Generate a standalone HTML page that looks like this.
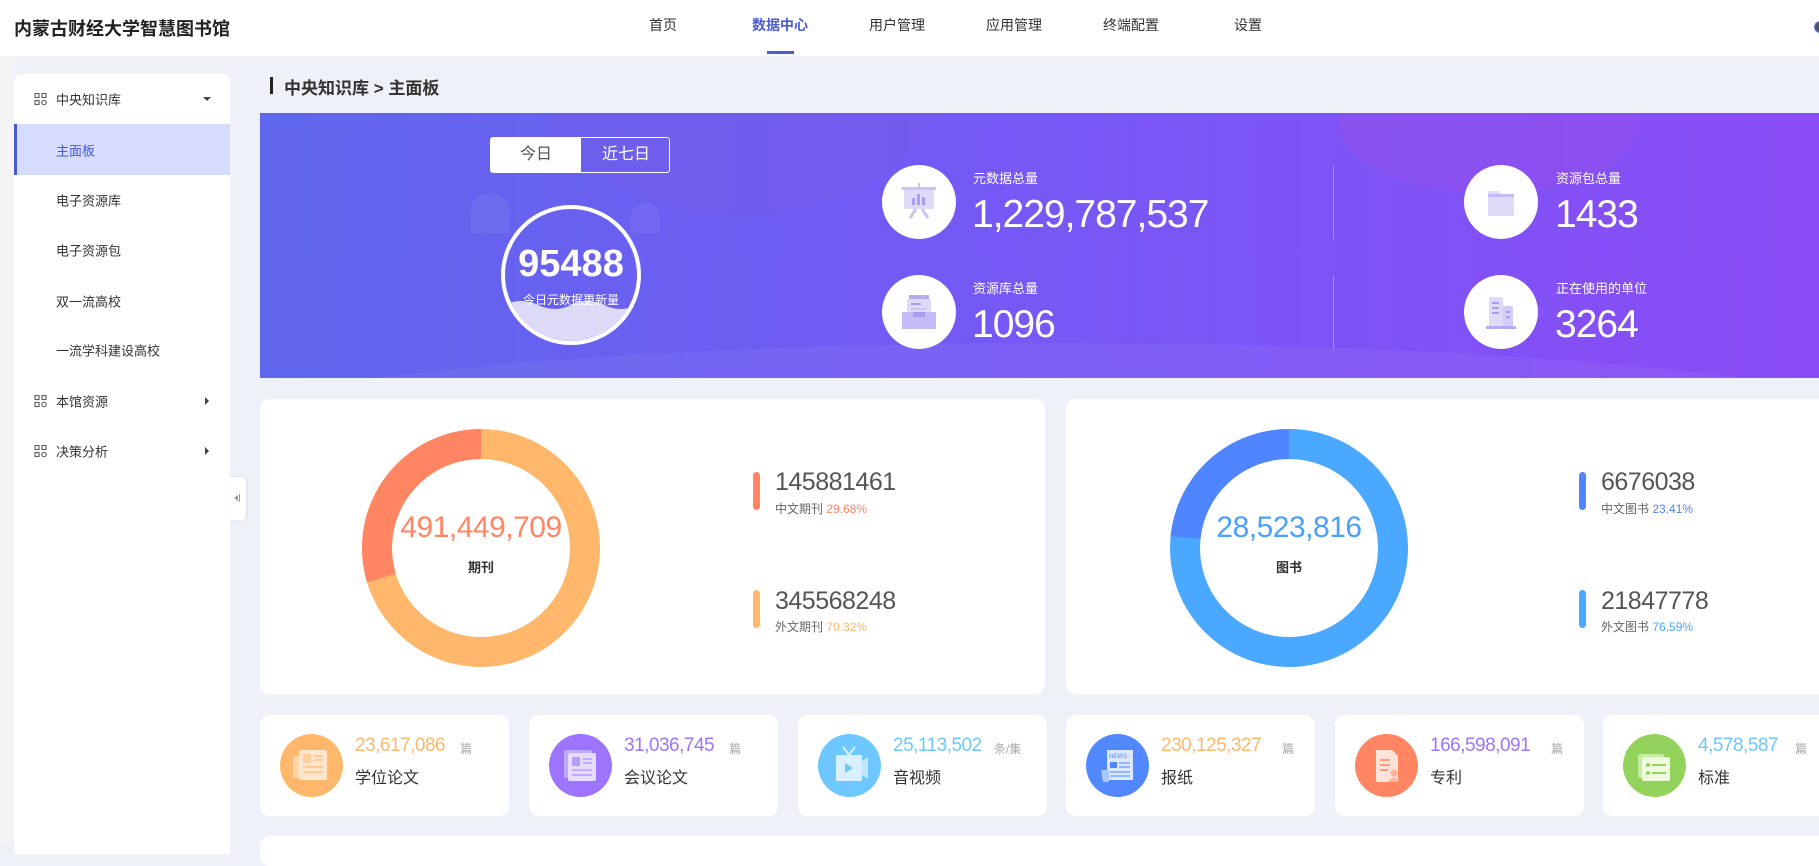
<!DOCTYPE html>
<html><head><meta charset="utf-8">
<style>
*{margin:0;padding:0;box-sizing:border-box}
body{width:1819px;height:843px;overflow:hidden;background:#eef1f8;font-family:"Liberation Sans","Noto Sans CJK SC",sans-serif;position:relative;color:#333}
.abs{position:absolute}
.hdr{left:0;top:0;width:1819px;height:56px;background:#fff}
.nav{top:0;height:52px;line-height:50px;font-size:14px;color:#333;transform:translateX(-50%)}
.side{left:0;top:56px;width:14px;height:787px;background:#f4f4f5}
.sb{left:14px;top:74px;width:216px;height:780px;background:#fff;border-radius:8px 8px 0 0}
.si{left:56px;font-size:13px;color:#333;transform:translateY(-50%)}
.ic{width:13px;height:13px;transform:translateY(-50%)}
.card{background:#fff;border-radius:10px}
.bn{left:260px;top:113px;width:1559px;height:265px;background:linear-gradient(90deg,#5f67ec 0%,#7459f5 45%,#8a4cf6 100%);overflow:hidden}
.wc{background:#fff;border-radius:50%}
.lbl{font-size:13px;color:#fff}
.num{font-size:39px;color:#fff;line-height:1;letter-spacing:-1px}
.sc .n{position:absolute;left:95px;top:20px;font-size:19px;letter-spacing:-0.5px}
.sc .u{position:absolute;top:25px;font-size:12px;color:#aaa}
.sc .t{position:absolute;left:95px;top:49px;font-size:16px;color:#333}
.sc .c{position:absolute;left:20px;top:19px;width:63px;height:63px;border-radius:50%}
</style></head><body>
<div class="abs hdr"></div>
<div class="abs" style="left:14px;top:15px;font-size:18px;font-weight:bold;color:#222">内蒙古财经大学智慧图书馆</div>
<div class="abs nav" style="left:663px">首页</div>
<div class="abs nav" style="left:780px;color:#4a5bd6;font-weight:bold">数据中心</div>
<div class="abs" style="left:767px;top:51px;width:27px;height:3px;background:#4a5bd6"></div>
<div class="abs nav" style="left:897px">用户管理</div>
<div class="abs nav" style="left:1014px">应用管理</div>
<div class="abs nav" style="left:1131px">终端配置</div>
<div class="abs nav" style="left:1248px">设置</div>
<div class="abs" style="left:1814px;top:21px;width:12px;height:12px;border-radius:50%;background:#555;border:1px solid #5a7cf0"></div>

<div class="abs side"></div>
<div class="abs sb"></div>
<svg class="abs ic" style="left:34px;top:99px" viewBox="0 0 13 13" fill="none" stroke="#666" stroke-width="1.2"><rect x="1" y="1" width="4" height="4"/><rect x="8" y="1" width="4" height="4"/><rect x="1" y="8" width="4" height="4"/><circle cx="10" cy="10" r="2.2"/></svg>
<div class="abs si" style="top:99px">中央知识库</div>
<div class="abs" style="left:203px;top:97px;border:4px solid transparent;border-top:4px solid #444;border-bottom:0"></div>
<div class="abs" style="left:14px;top:124px;width:216px;height:51px;background:#d6dcfb;border-left:3px solid #4a5bd6"></div>
<div class="abs si" style="top:150px;color:#4a5bd6">主面板</div>
<div class="abs si" style="top:200px">电子资源库</div>
<div class="abs si" style="top:250px">电子资源包</div>
<div class="abs si" style="top:301px">双一流高校</div>
<div class="abs si" style="top:350px">一流学科建设高校</div>
<svg class="abs ic" style="left:34px;top:401px" viewBox="0 0 13 13" fill="none" stroke="#666" stroke-width="1.2"><rect x="1" y="1" width="4" height="4"/><rect x="8" y="1" width="4" height="4"/><rect x="1" y="8" width="4" height="4"/><circle cx="10" cy="10" r="2.2"/></svg>
<div class="abs si" style="top:401px">本馆资源</div>
<div class="abs" style="left:205px;top:397px;border:4px solid transparent;border-left:4px solid #444;border-right:0"></div>
<svg class="abs ic" style="left:34px;top:451px" viewBox="0 0 13 13" fill="none" stroke="#666" stroke-width="1.2"><rect x="1" y="1" width="4" height="4"/><rect x="8" y="1" width="4" height="4"/><rect x="1" y="8" width="4" height="4"/><circle cx="10" cy="10" r="2.2"/></svg>
<div class="abs si" style="top:451px">决策分析</div>
<div class="abs" style="left:205px;top:447px;border:4px solid transparent;border-left:4px solid #444;border-right:0"></div>
<div class="abs" style="left:230px;top:477px;width:16px;height:43px;background:#fff;border-radius:0 4px 4px 0;box-shadow:1px 0 3px rgba(0,0,0,.08)"></div>
<div class="abs" style="left:234px;top:495px;border:3px solid transparent;border-right:4px solid #999;border-left:0"></div>
<div class="abs" style="left:239px;top:494px;width:1px;height:8px;background:#999"></div>

<div class="abs" style="left:270px;top:77px;width:3px;height:17px;background:#222"></div>
<div class="abs" style="left:284px;top:74px;font-size:17px;font-weight:bold;color:#333">中央知识库 &gt; 主面板</div>

<div class="abs bn">
 <div class="abs" style="left:290px;top:-120px;width:380px;height:220px;border-radius:50%;background:rgba(120,90,220,.25)"></div>
 <div class="abs" style="left:1080px;top:-60px;width:300px;height:140px;border-radius:50%;background:rgba(160,80,230,.3)"></div>
 <div class="abs" style="left:-100px;top:230px;width:1800px;height:200px;border-radius:50%;background:rgba(255,255,255,.05)"></div>
 <div class="abs" style="left:210px;top:80px;width:40px;height:40px;border-radius:20px 20px 0 0;background:rgba(255,255,255,.06)"></div>
 <div class="abs" style="left:370px;top:90px;width:30px;height:30px;border-radius:15px 15px 0 0;background:rgba(255,255,255,.06)"></div>
</div>
<div class="abs" style="left:490px;top:137px;width:180px;height:36px;border:1px solid #fff;border-radius:3px;overflow:hidden">
 <div class="abs" style="left:0;top:0;width:90px;height:34px;background:#fff;color:#555;text-align:center;line-height:34px;font-size:16px">今日</div>
 <div class="abs" style="left:90px;top:0;width:90px;height:34px;color:#fff;text-align:center;line-height:34px;font-size:16px">近七日</div>
</div>
<div class="abs" style="left:501px;top:205px;width:140px;height:140px;border-radius:50%;border:4px solid #fff;overflow:hidden">
 <svg class="abs" style="left:0;top:88px" width="132" height="55" viewBox="0 0 132 55"><path d="M0 8 Q16 0 33 8 T66 8 T99 8 T132 8 V55 H0Z" fill="#dcdaf6"/></svg>
 <div class="abs" style="left:0;width:132px;top:36px;text-align:center;font-size:38px;font-weight:bold;color:#fff;line-height:1">95488</div>
 <div class="abs" style="left:0;width:132px;top:82px;text-align:center;font-size:12px;color:#fff">今日元数据更新量</div>
</div>

<div class="abs wc" style="left:882px;top:165px;width:74px;height:74px"></div>
<svg class="abs" style="left:899px;top:183px" width="40" height="40" viewBox="0 0 40 40"><rect x="19" y="0" width="2" height="4" fill="#c9c4f5"/><rect x="5" y="4" width="30" height="22" fill="#dedaf8"/><rect x="3" y="4" width="34" height="3" fill="#c9c4f5"/><rect x="13" y="15" width="3" height="7" fill="#a89ef0"/><rect x="18" y="11" width="3" height="11" fill="#a89ef0"/><rect x="23" y="14" width="3" height="8" fill="#a89ef0"/><path d="M17 26 L11 35 M23 26 L29 35" stroke="#c9c4f5" stroke-width="3"/></svg>
<div class="abs lbl" style="left:973px;top:168px">元数据总量</div>
<div class="abs num" style="left:972px;top:195px">1,229,787,537</div>
<div class="abs wc" style="left:882px;top:275px;width:74px;height:74px"></div>
<svg class="abs" style="left:899px;top:292px" width="40" height="40" viewBox="0 0 40 40"><rect x="10" y="3" width="20" height="6" fill="#b3abf3"/><rect x="8" y="7" width="24" height="20" fill="#dedaf8"/><rect x="12" y="11" width="10" height="2" fill="#a89ef0"/><rect x="12" y="16" width="16" height="2" fill="#c9c4f5"/><path d="M3 20 H37 V37 H3Z" fill="#c3bbf5"/><path d="M14 20 H26 V25 H14Z" fill="#a89ef0"/></svg>
<div class="abs lbl" style="left:973px;top:278px">资源库总量</div>
<div class="abs num" style="left:972px;top:305px">1096</div>
<div class="abs" style="left:1333px;top:166px;width:1px;height:73px;background:rgba(255,255,255,.35)"></div>
<div class="abs" style="left:1333px;top:276px;width:1px;height:73px;background:rgba(255,255,255,.35)"></div>
<div class="abs wc" style="left:1464px;top:165px;width:74px;height:74px"></div>
<svg class="abs" style="left:1481px;top:183px" width="40" height="40" viewBox="0 0 40 40"><path d="M7 8 H17 L20 11 H33 V33 H7Z" fill="#dedaf8"/><rect x="7" y="11" width="26" height="3" fill="#c3bbf5"/></svg>
<div class="abs lbl" style="left:1556px;top:168px">资源包总量</div>
<div class="abs num" style="left:1555px;top:195px">1433</div>
<div class="abs wc" style="left:1464px;top:275px;width:74px;height:74px"></div>
<svg class="abs" style="left:1481px;top:292px" width="40" height="40" viewBox="0 0 40 40"><rect x="8" y="5" width="14" height="29" fill="#dedaf8"/><rect x="22" y="14" width="10" height="20" fill="#d2ccf7"/><rect x="11" y="10" width="7" height="2" fill="#a89ef0"/><rect x="11" y="15" width="7" height="2" fill="#a89ef0"/><rect x="11" y="20" width="7" height="2" fill="#a89ef0"/><rect x="25" y="19" width="4" height="2" fill="#a89ef0"/><rect x="25" y="24" width="4" height="2" fill="#a89ef0"/><rect x="5" y="34" width="30" height="3" fill="#b3abf3"/></svg>
<div class="abs lbl" style="left:1556px;top:278px">正在使用的单位</div>
<div class="abs num" style="left:1555px;top:305px">3264</div>

<div class="abs card" style="left:260px;top:399px;width:785px;height:295px"></div>
<svg class="abs" style="left:362px;top:429px" width="238" height="238" viewBox="0 0 238 238"><circle cx="119" cy="119" r="104" fill="none" stroke="#ffb86b" stroke-width="30"/><circle cx="119" cy="119" r="104" fill="none" stroke="#ff8563" stroke-width="30" stroke-dasharray="194 1000" transform="rotate(-196.8 119 119)"/></svg>
<div class="abs" style="left:381px;width:200px;top:513px;text-align:center;font-size:30px;color:#ff8563;line-height:1;letter-spacing:-0.5px">491,449,709</div>
<div class="abs" style="left:381px;width:200px;top:557px;text-align:center;font-size:13px;font-weight:bold;color:#333">期刊</div>
<div class="abs" style="left:753px;top:472px;width:7px;height:38px;border-radius:4px;background:#ff8563"></div>
<div class="abs" style="left:775px;top:470px;font-size:25px;color:#555;line-height:1;letter-spacing:-0.5px">145881461</div>
<div class="abs" style="left:775px;top:500px;font-size:12px;color:#666">中文期刊 <span style="color:#ff8563">29.68%</span></div>
<div class="abs" style="left:753px;top:590px;width:7px;height:38px;border-radius:4px;background:#ffb86b"></div>
<div class="abs" style="left:775px;top:589px;font-size:25px;color:#555;line-height:1;letter-spacing:-0.5px">345568248</div>
<div class="abs" style="left:775px;top:618px;font-size:12px;color:#666">外文期刊 <span style="color:#ffb86b">70.32%</span></div>

<div class="abs card" style="left:1066px;top:399px;width:780px;height:295px"></div>
<svg class="abs" style="left:1170px;top:429px" width="238" height="238" viewBox="0 0 238 238"><circle cx="119" cy="119" r="104" fill="none" stroke="#4aa8ff" stroke-width="30"/><circle cx="119" cy="119" r="104" fill="none" stroke="#4f86ff" stroke-width="30" stroke-dasharray="153 1000" transform="rotate(-174.3 119 119)"/></svg>
<div class="abs" style="left:1189px;width:200px;top:513px;text-align:center;font-size:30px;color:#4a9fff;line-height:1;letter-spacing:-0.5px">28,523,816</div>
<div class="abs" style="left:1189px;width:200px;top:557px;text-align:center;font-size:13px;font-weight:bold;color:#333">图书</div>
<div class="abs" style="left:1579px;top:472px;width:7px;height:38px;border-radius:4px;background:#4f86ff"></div>
<div class="abs" style="left:1601px;top:470px;font-size:25px;color:#555;line-height:1;letter-spacing:-0.5px">6676038</div>
<div class="abs" style="left:1601px;top:500px;font-size:12px;color:#666">中文图书 <span style="color:#4f86ff">23.41%</span></div>
<div class="abs" style="left:1579px;top:590px;width:7px;height:38px;border-radius:4px;background:#4aa8ff"></div>
<div class="abs" style="left:1601px;top:589px;font-size:25px;color:#555;line-height:1;letter-spacing:-0.5px">21847778</div>
<div class="abs" style="left:1601px;top:618px;font-size:12px;color:#666">外文图书 <span style="color:#4aa8ff">76.59%</span></div>

<div class="abs card sc" style="left:260px;top:715px;width:249px;height:101px"><div class="c" style="background:#ffb86b"></div><svg class="abs" style="left:33px;top:33px" width="38" height="36"><rect x="0" y="8" width="8" height="22" fill="#ffd6a8"/><rect x="6" y="2" width="28" height="30" rx="2" fill="#ffe6cc"/><rect x="10" y="6" width="8" height="9" fill="#ffcf9c"/><path d="M21 8H30M21 12H30M10 19H30M10 24H30" stroke="#ffc080" stroke-width="1.5"/></svg><div class="n" style="color:#ffb86b">23,617,086</div><div class="u" style="left:200px">篇</div><div class="t">学位论文</div></div>
<div class="abs card sc" style="left:529px;top:715px;width:249px;height:101px"><div class="c" style="background:#9d74ff"></div><svg class="abs" style="left:33px;top:33px" width="38" height="36"><rect x="2" y="2" width="28" height="28" rx="2" fill="#c0a8ff"/><rect x="6" y="5" width="28" height="28" rx="2" fill="#e6dcff"/><rect x="10" y="9" width="8" height="9" fill="#b79cff"/><path d="M21 11H30M21 15H30M10 22H30M10 27H30" stroke="#b79cff" stroke-width="1.5"/></svg><div class="n" style="color:#9d74ff">31,036,745</div><div class="u" style="left:200px">篇</div><div class="t">会议论文</div></div>
<div class="abs card sc" style="left:798px;top:715px;width:249px;height:101px"><div class="c" style="background:#6ec8ff"></div><svg class="abs" style="left:33px;top:30px" width="38" height="40"><path d="M12 2 L18 10 L24 2" stroke="#d8f0ff" stroke-width="2" fill="none"/><rect x="5" y="10" width="26" height="26" fill="#d8f0ff"/><path d="M31 16 L37 12 V34 L31 30Z" fill="#bfe5ff"/><path d="M14 18 L22 23 L14 28Z" fill="#6ec8ff"/></svg><div class="n" style="color:#6ec8ff">25,113,502</div><div class="u" style="left:196px">条/集</div><div class="t">音视频</div></div>
<div class="abs card sc" style="left:1066px;top:715px;width:249px;height:101px"><div class="c" style="background:#5288ff"></div><svg class="abs" style="left:33px;top:33px" width="38" height="36"><rect x="8" y="2" width="26" height="30" fill="#dce8ff"/><path d="M2 22 H10 V34 H4Z" fill="#aac6ff"/><text x="10" y="10" font-size="6" fill="#5288ff" font-family="Liberation Sans">NEWS</text><rect x="11" y="14" width="7" height="6" fill="#5288ff"/><path d="M20 15H31M20 19H31M11 24H31M11 28H31" stroke="#7fa6ff" stroke-width="1.5"/></svg><div class="n" style="color:#ffb86b">230,125,327</div><div class="u" style="left:216px">篇</div><div class="t">报纸</div></div>
<div class="abs card sc" style="left:1335px;top:715px;width:249px;height:101px"><div class="c" style="background:#ff8563"></div><svg class="abs" style="left:33px;top:33px" width="38" height="36"><path d="M8 2 H24 L30 8 V34 H8Z" fill="#ffe2d8"/><path d="M12 12H22M12 17H22M12 22H20" stroke="#ff9a7c" stroke-width="2"/><circle cx="26" cy="25" r="3.5" fill="#ffb29a"/><path d="M20 34 Q26 26 32 34Z" fill="#ffb29a"/></svg><div class="n" style="color:#9d74ff">166,598,091</div><div class="u" style="left:216px">篇</div><div class="t">专利</div></div>
<div class="abs card sc" style="left:1603px;top:715px;width:249px;height:101px"><div class="c" style="background:#93d35c"></div><svg class="abs" style="left:33px;top:33px" width="38" height="36"><rect x="2" y="6" width="26" height="24" rx="2" fill="#c6ec9e"/><rect x="6" y="9" width="28" height="24" rx="2" fill="#eefade"/><circle cx="12" cy="17" r="2" fill="#93d35c"/><circle cx="12" cy="25" r="2" fill="#93d35c"/><path d="M16 17H30M16 25H30" stroke="#93d35c" stroke-width="2"/></svg><div class="n" style="color:#6ec8ff">4,578,587</div><div class="u" style="left:192px">篇</div><div class="t">标准</div></div>
<div class="abs card" style="left:260px;top:836px;width:1600px;height:30px"></div>
</body></html>
